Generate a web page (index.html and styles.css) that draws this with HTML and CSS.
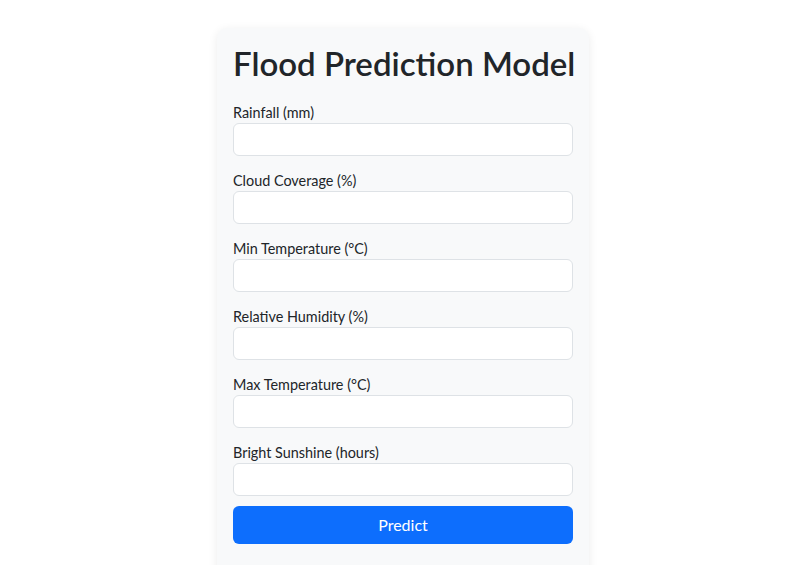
FILE: index.html
```html
<!DOCTYPE html>
<html lang="en">
<head>
<meta charset="utf-8">
<title>Flood Prediction Model</title>
<link rel="stylesheet" href="styles.css">
</head>
<body>
  <main class="page">
    <form class="card">
      <h1 class="title">Flood Prediction Model</h1>
      <div class="field">
        <label class="label" for="rainfall">Rainfall (mm)</label>
        <input class="input" id="rainfall" type="text">
      </div>
      <div class="field">
        <label class="label" for="cloud">Cloud Coverage (%)</label>
        <input class="input" id="cloud" type="text">
      </div>
      <div class="field">
        <label class="label" for="mintemp">Min Temperature (°C)</label>
        <input class="input" id="mintemp" type="text">
      </div>
      <div class="field">
        <label class="label" for="humidity">Relative Humidity (%)</label>
        <input class="input" id="humidity" type="text">
      </div>
      <div class="field">
        <label class="label" for="maxtemp">Max Temperature (°C)</label>
        <input class="input" id="maxtemp" type="text">
      </div>
      <div class="field">
        <label class="label" for="sunshine">Bright Sunshine (hours)</label>
        <input class="input" id="sunshine" type="text">
      </div>
      <button class="button" type="button">Predict</button>
    </form>
  </main>
</body>
</html>
```

FILE: styles.css
```css
* { box-sizing: border-box; }

html, body {
  margin: 0;
  padding: 0;
  background: #ffffff;
  font-family: Lato, "Noto Sans", sans-serif;
  color: #212529;
}

.page {
  display: flex;
  justify-content: center;
  padding-top: 28px;
}

.card {
  width: 372px;
  background: #f8f9fa;
  border-radius: 10px;
  box-shadow: 0 2px 10px rgba(0, 0, 0, 0.08);
  padding: 16px 16px 40px;
  display: flex;
  flex-direction: column;
}

.title {
  margin: 0 0 18px;
  font-size: 33px;
  font-weight: 600;
  line-height: 1.2;
  white-space: nowrap;
}

.field {
  display: flex;
  flex-direction: column;
  margin-bottom: 14px;
}

.label {
  font-size: 14.4px;
  line-height: 21px;
}

.input {
  height: 33px;
  border: 1px solid #dee2e6;
  border-radius: 6px;
  background: #ffffff;
  font: inherit;
  padding: 4px 12px;
}

.field:last-of-type { margin-bottom: 10px; }

.button {
  height: 38px;
  border: none;
  border-radius: 6px;
  background: #0d6efd;
  color: #ffffff;
  font: inherit;
  font-size: 16px;
}
```
